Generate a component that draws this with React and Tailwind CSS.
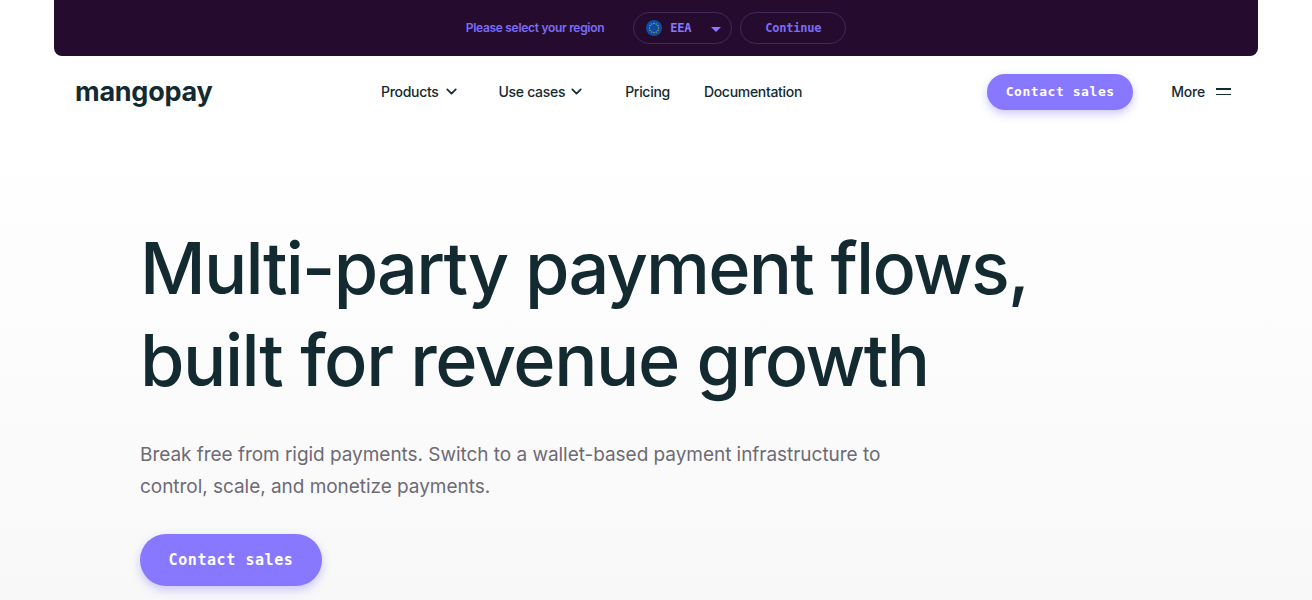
import { ChevronDown } from 'lucide-react'

const sans = "font-['Inter','Liberation_Sans',sans-serif]"
const mono = "font-['DejaVu_Sans_Mono','Liberation_Mono',monospace]"

function EuFlag() {
  const stars = Array.from({ length: 12 }, (_, i) => {
    const a = (i / 12) * Math.PI * 2
    return [8 + Math.cos(a) * 4.6, 8 + Math.sin(a) * 4.6]
  })
  return (
    <svg width="16" height="16" viewBox="0 0 16 16" className="shrink-0">
      <circle cx="8" cy="8" r="8" fill="#0a4ea8" />
      {stars.map(([x, y], i) => (
        <circle key={i} cx={x} cy={y} r="0.6" fill="#f5c518" />
      ))}
    </svg>
  )
}

export default function App() {
  return (
    <div className={`h-[600px] overflow-hidden bg-white text-[#132a31] ${sans}`}>
      {/* Region banner */}
      <div className="mx-[54px] flex h-14 items-center justify-center rounded-b-lg bg-[#250c2e]">
        <span className="mr-[29px] text-[12px] font-semibold tracking-[-0.3px] text-[#7b6cf6]">Please select your region</span>
        <div className="mr-2 flex h-8 w-[99px] items-center rounded-full border border-[#3f2a58] pl-[12px] pr-[10px]">
          <EuFlag />
          <span className={`ml-2 text-[12px] font-bold tracking-[-0.2px] text-[#8878ff] ${mono}`}>EEA</span>
          <span className="ml-auto mt-[3px] h-0 w-0 border-x-[5px] border-t-[5px] border-x-transparent border-t-[#8878ff]" />
        </div>
        <div className={`flex h-8 w-[106px] items-center justify-center rounded-full border border-[#3f2a58] text-[12px] font-bold tracking-[-0.2px] text-[#7b6cf6] ${mono}`}>
          Continue
        </div>
      </div>

      {/* Navbar */}
      <nav className="flex h-[72px] items-center pb-[1px] pl-[75px] pr-[81px]">
        <span className="w-[306px] text-[27px] font-bold leading-none tracking-[-0.25px]">mangopay</span>
        <div className="flex items-center text-[14px] font-medium tracking-[-0.3px]">
          <span>Products</span>
          <ChevronDown className="ml-[4px] h-[17px] w-[17px]" strokeWidth={2.4} />
          <span className="ml-[39px]">Use cases</span>
          <ChevronDown className="ml-[3px] h-[17px] w-[17px]" strokeWidth={2.4} />
          <span className="ml-[40px]">Pricing</span>
          <span className="ml-[34px]">Documentation</span>
        </div>
        <button className={`ml-auto flex h-9 w-[146px] items-center justify-center rounded-full bg-[#8878ff] text-[13px] font-bold tracking-[0.55px] text-white shadow-[0_4px_10px_rgba(136,120,255,0.4)] ${mono}`}>
          Contact sales
        </button>
        <span className="ml-[38px] text-[14px] font-medium tracking-[-0.2px]">More</span>
        <div className="ml-[11px] flex w-[15px] flex-col gap-[4px]">
          <span className="h-[1.5px] bg-[#132a31]" />
          <span className="h-[1.5px] bg-[#132a31]" />
        </div>
      </nav>

      {/* Hero */}
      <main className="h-[472px] bg-gradient-to-b from-white to-[#f8f8f8] pl-[140px] pt-[94px]">
        <h1 className="text-[72px] font-medium leading-[92px] tracking-[-1.75px]">
          Multi-party payment flows,
          <br />
          <span className="tracking-[-1.45px]">built for revenue growth</span>
        </h1>
        <p className="mt-[33px] text-[19px] leading-[32px] tracking-[-0.04px] text-[#6d6a75]">
          Break free from rigid payments. Switch to a wallet-based payment infrastructure to
          <br />
          control, scale, and monetize payments.
        </p>
        <button className={`mt-[31px] flex h-[52px] w-[182px] items-center justify-center rounded-full bg-[#8878ff] text-[15px] font-bold tracking-[0.57px] text-white shadow-[0_4px_10px_rgba(136,120,255,0.4)] ${mono}`}>
          Contact sales
        </button>
      </main>
    </div>
  )
}
